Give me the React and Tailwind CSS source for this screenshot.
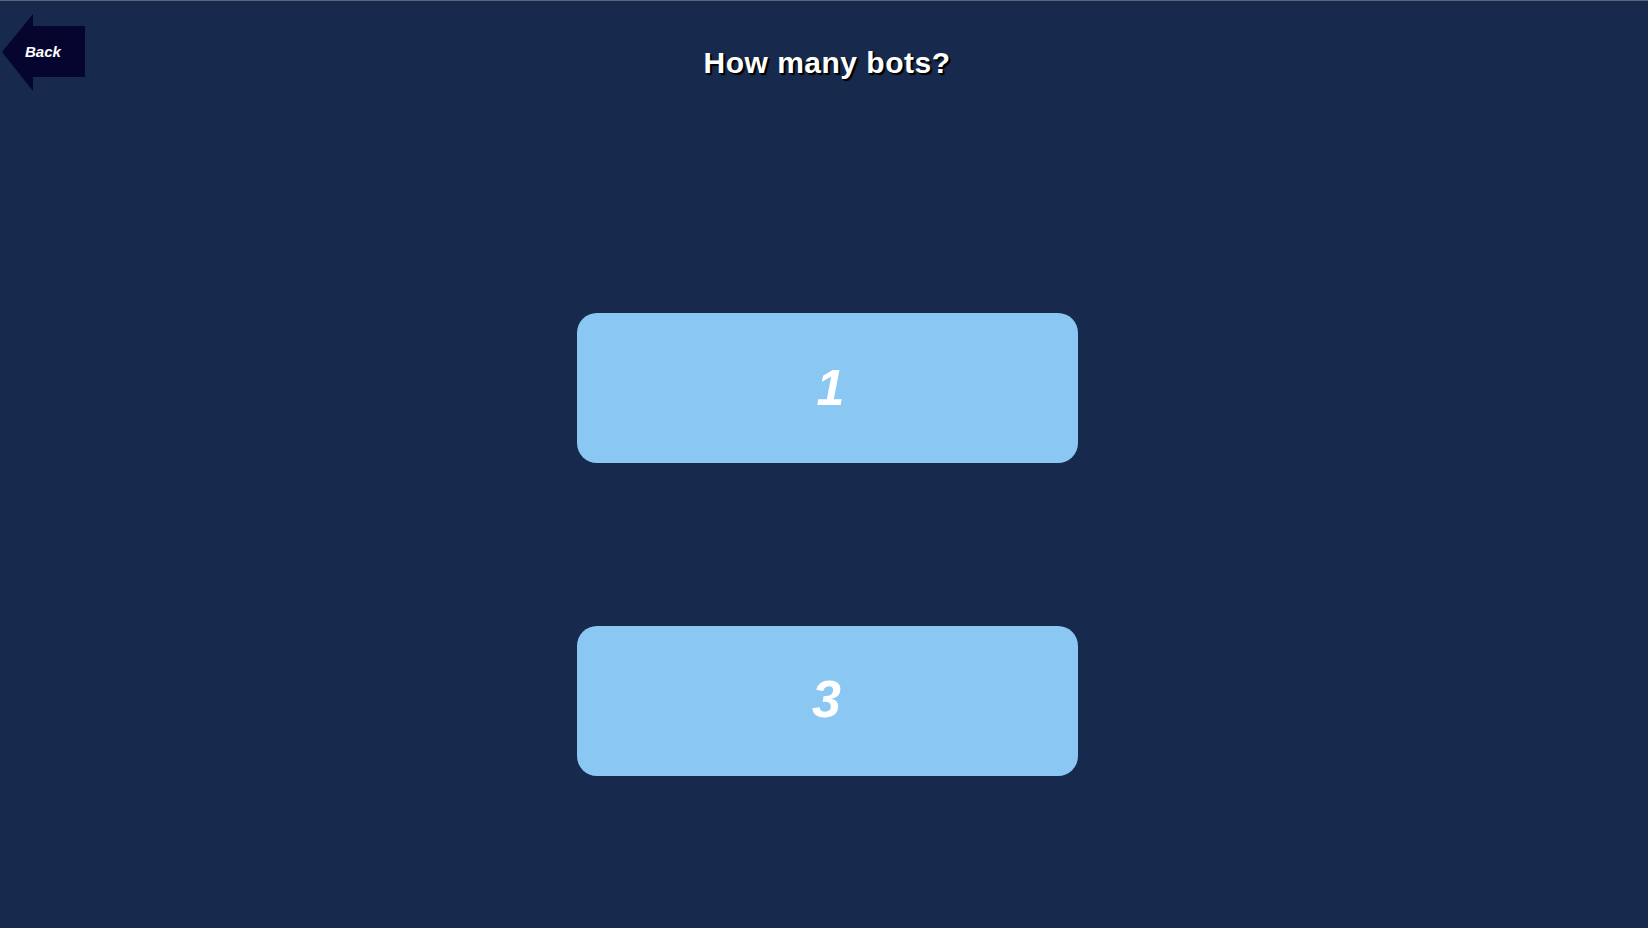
export default function App() {
  return (
    <div
      className="relative w-[1648px] h-[928px] bg-[#172a4e] border-t border-[#5b6478] flex flex-col items-center overflow-hidden"
      style={{ fontFamily: '"Liberation Sans", Arial, sans-serif' }}
    >
      <button className="absolute left-0 top-[12px] w-[86px] h-[80px] flex items-center">
        <svg className="absolute inset-0" width="86" height="80" viewBox="0 0 86 80">
          <polygon points="2,39 33,1 33,13 85,13 85,64 33,64 33,78" fill="#050530" />
        </svg>
        <span className="relative ml-[25px] mt-[-1px] text-[15px] font-bold italic text-white">Back</span>
      </button>

      <h1
        className="mt-[47px] text-[30px] leading-[30px] font-bold text-white tracking-[0.5px] pl-[6px]"
        style={{ textShadow: '2px 2px 1px #000, 1px 1px 0 #000' }}
      >
        How many bots?
      </h1>

      <div className="mt-[235px] flex flex-col gap-[163px] pl-[7px]">
        <button className="w-[501px] h-[150px] rounded-[20px] bg-[#8ac8f3] flex items-center justify-center text-white text-[50px] font-bold italic leading-none">
          <span className="pl-[6px]">1</span>
        </button>
        <button className="w-[501px] h-[150px] rounded-[20px] bg-[#8ac8f3] flex items-center justify-center text-white text-[52px] font-bold italic leading-none">
          <span className="pr-[2px] mt-[-4px]">3</span>
        </button>
      </div>
    </div>
  );
}
